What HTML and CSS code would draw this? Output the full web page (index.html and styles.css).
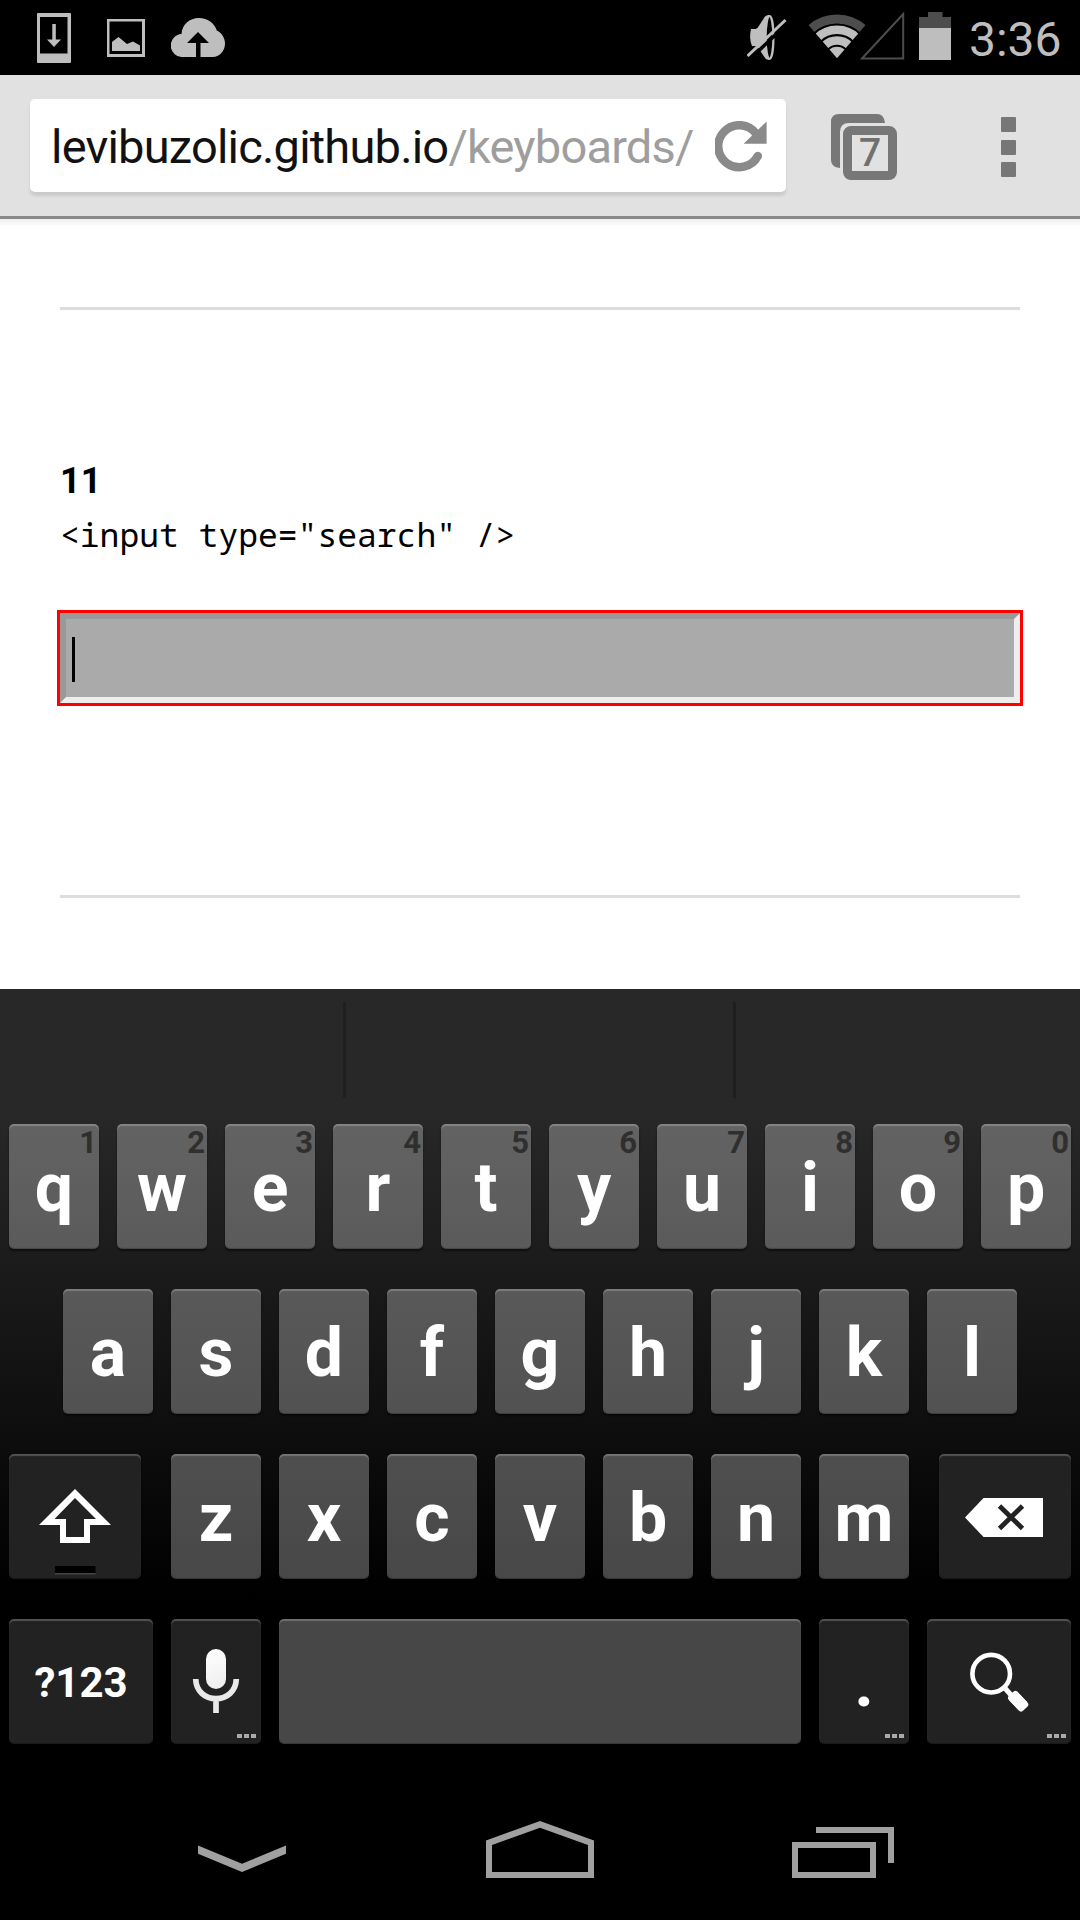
FILE: index.html
```html
<!DOCTYPE html>
<html lang="en">
<head>
<meta charset="utf-8">
<title>Keyboards</title>
<link rel="stylesheet" href="styles.css">
</head>
<body>
<header class="status">
  <div class="notifications">
    <svg width="34" height="50" viewBox="37 13 34 50"><path class="light" fill-rule="evenodd" d="M38 13h32a1 1 0 0 1 1 1v48a1 1 0 0 1-1 1H38a1 1 0 0 1-1-1V14a1 1 0 0 1 1-1zM40 17v36.500h27.500V17z"/><path class="light" d="M52.300 24h3.500v15.500H61L54 47l-7-7.500h5.300z"/></svg>
    <svg width="38" height="38" viewBox="107 19 38 38"><path class="light" fill-rule="evenodd" d="M107 19h38v38h-38zM109.500 21.500v32.500h32.500V21.500z"/><path class="light" d="M112 42l6.500-5 8.500 7 6-2.500 7 4V51h-28z"/></svg>
    <svg width="54" height="39" viewBox="171 19 54 39"><path class="light" d="M183 58a11.500 11.500 0 0 1-1.500-23C182 25.500 189.500 19 199 19c8.500 0 15.500 5 17.800 12.500C222 34 225 39 225 44.500 225 52 219.500 58 212.500 58H200.500V44H209L198 33 187 44h9v14z"/></svg>
  </div>
  <div class="system">
    <svg class="mute" width="40" height="48" viewBox="747 14 40 48"><path class="light" d="M751 29h4.500Q758 28 759.500 25L765 16.500Q767 14.500 769.500 15V60Q766 60 764 56.500L757 46H752q-1.700-4-1.900-8.500 0-5 .9-8.500z"/><ellipse cx="769.500" cy="37.500" rx="3.900" ry="21.300" fill="#000" stroke="#bebebe" stroke-width="2.200"/><path d="M748.500 60.500L788.500 22.500" stroke="#000" stroke-width="3.500"/><path d="M747.500 56L785.500 20" stroke="#bebebe" stroke-width="3"/></svg>
    <svg class="wifi" width="58" height="45" viewBox="807.500 14 58 45"><clipPath id="wedge"><path d="M836.500 58.300L802 18V8h69v10z"/></clipPath><g clip-path="url(#wedge)" fill="none" stroke="#bebebe"><circle cx="836.500" cy="58.300" r="39.300" stroke="#4d4d4d" stroke-width="8.800"/><circle cx="836.500" cy="58.300" r="28.500" stroke-width="8.500"/><circle cx="836.500" cy="58.300" r="17.700" stroke-width="8.500"/><circle cx="836.500" cy="58.300" r="5.800" stroke-width="11.600"/></g></svg>
    <svg class="signal" width="45" height="49" viewBox="860 11 45 49"><path d="M862 58.500L903.200 14v44.500z" fill="none" stroke="#4d4d4d" stroke-width="2"/></svg>
    <svg class="battery" width="32" height="48" viewBox="919 12 32 48"><path fill="#4d4d4d" d="M928 12h14.500v5H951v11h-32V17h9z"/><path class="light" d="M919 28h32v32h-32z"/></svg>
    <span class="clock">3:36</span>
  </div>
</header>
<nav class="toolbar">
  <div class="omnibox">
    <span class="url">levibuzolic.github.io<span class="path">/keyboards/</span></span>
    <svg class="reload" width="52" height="52" viewBox="715 121 52 52"><path d="M757.800 156a21 21 0 1 1-1.500-22" fill="none" stroke="#8a8a8a" stroke-width="8.500" stroke-linecap="round"/><path fill="#8a8a8a" d="M766.600 121.500v22.200h-23z"/></svg>
  </div>
  <div class="tabs">
    <svg width="66" height="66" viewBox="831 114 66 66"><path fill="#777" d="M839 114h38q7 0 8 9H849q-9 0-9 9v36q-9-1-9-8v-38q0-8 8-8z"/><rect x="847.500" y="130.500" width="45" height="45" rx="3.500" fill="none" stroke="#777" stroke-width="9"/><text x="870" y="166" class="tab-count">7</text></svg>
  </div>
  <div class="menu"><i></i><i></i><i></i></div>
</nav>
<main class="page">
  <hr>
  <section class="sample">
    <h2>11</h2>
    <code>&lt;input type="search" /&gt;</code>
    <div class="field"><span class="caret"></span></div>
  </section>
  <hr>
</main>
<section class="keyboard">
  <div class="suggestions"><span></span><span></span><span></span></div>
  <div class="rows">
    <div class="row">
      <div class="key"><small>1</small>q</div><div class="key"><small>2</small>w</div><div class="key"><small>3</small>e</div><div class="key"><small>4</small>r</div><div class="key"><small>5</small>t</div><div class="key"><small>6</small>y</div><div class="key"><small>7</small>u</div><div class="key"><small>8</small>i</div><div class="key"><small>9</small>o</div><div class="key"><small>0</small>p</div>
    </div>
    <div class="row">
      <div class="key">a</div><div class="key">s</div><div class="key">d</div><div class="key">f</div><div class="key">g</div><div class="key">h</div><div class="key">j</div><div class="key">k</div><div class="key">l</div>
    </div>
    <div class="row spread">
      <div class="key dark edge"><svg width="132" height="125" viewBox="9 1454 132 125"><path fill="#fff" fill-rule="evenodd" d="M75 1489l36 36H90v18H60v-18H39zM75 1498l-20.500 21H66v18h18v-18h12z"/><path d="M55 1566h40.500v7H55z"/><path fill="#444" d="M55 1573h40.500v1.500H55z"/></svg></div>
      <div class="row letters"><div class="key">z</div><div class="key">x</div><div class="key">c</div><div class="key">v</div><div class="key">b</div><div class="key">n</div><div class="key">m</div></div>
      <div class="key dark edge"><svg width="132" height="125" viewBox="939 1454 132 125"><path fill="#fff" d="M965 1517.500l18.500-19.500H1043v39H983.500z"/><path d="M999.500 1506l23 22.500m0-22.500l-23 22.500" stroke="#222" stroke-width="4.800"/></svg></div>
    </div>
    <div class="row">
      <div class="key dark wide label">?123</div>
      <div class="key dark"><svg width="90" height="125" viewBox="171 1619 90 125"><defs><linearGradient id="mic" gradientUnits="userSpaceOnUse" x1="206" y1="1649" x2="226" y2="1713"><stop offset="0" stop-color="#fff"/><stop offset="1" stop-color="#e4e4e4"/></linearGradient></defs><rect x="206" y="1649" width="20" height="40" rx="10" fill="url(#mic)"/><path d="M195.700 1679C196 1691 205 1698.700 216 1698.700S236 1691 236.300 1679M216 1699v14" fill="none" stroke="#e9e9e9" stroke-width="5.700"/></svg><b class="more"></b></div>
      <div class="key space"></div>
      <div class="key dark">.<b class="more"></b></div>
      <div class="key dark wide"><svg width="144" height="125" viewBox="927 1619 144 125"><circle cx="991.200" cy="1673.700" r="18.800" fill="none" stroke="#fff" stroke-width="4.600"/><path d="M1003 1686l8 9" stroke="#fff" stroke-width="5"/><path d="M1013.500 1696.500l9.500 9.500" stroke="#fff" stroke-width="11.500" stroke-linejoin="round"/><rect x="-10" y="-6" width="20.500" height="12" rx="3" transform="translate(1018 1701) rotate(47)" fill="#fff"/></svg><b class="more"></b></div>
    </div>
  </div>
</section>
<footer class="navbar">
  <svg width="88" height="27" viewBox="198 1845 88 27"><path d="M198 1845.500l44 18.200 44-18.200v8.200l-44 18.300-44-18.300z"/></svg>
  <svg width="108" height="57" viewBox="486 1821 108 57"><path fill-rule="evenodd" d="M540 1821l54 19.500V1878H486v-37.500zM540 1827.700l-48 17.300v27h96v-27z"/></svg>
  <svg width="102" height="51" viewBox="792 1827 102 51"><path fill-rule="evenodd" d="M792 1842h84v36h-84zM798 1848v24h72v-24zM816 1827h78v36h-6v-30h-72z"/></svg>
</footer>
</body>
</html>
```
FILE: styles.css
```css
* { box-sizing: border-box; }
body {
  margin: 0;
  width: 1080px;
  height: 1920px;
  overflow: hidden;
  display: flex;
  flex-direction: column;
  background: #000;
  font-family: Roboto, sans-serif;
}
svg { display: block; flex: none; }
.light { fill: #bebebe; }

.status {
  height: 75px;
  display: flex;
  justify-content: space-between;
  padding: 0 19px 0 37px;
}
.notifications { display: flex; align-items: center; gap: 36px; }
.notifications svg:last-child { margin-left: -10px; }
.system { display: flex; align-items: flex-start; }
.mute { margin-top: 14px; }
.wifi { margin: 14px 0 0 20.500px; }
.signal { margin: 11px 0 0 -5.500px; }
.battery { margin: 12px 18px 0 14px; }
.clock { width: 92px; font-size: 48px; line-height: 79px; color: #bebebe; white-space: nowrap; }

.toolbar {
  height: 144px;
  display: flex;
  align-items: flex-start;
  padding: 24px 64px 0 30px;
  background: #e1e1e1;
  border-bottom: 3px solid #888a89;
}
.omnibox {
  width: 756px;
  height: 93px;
  display: flex;
  align-items: center;
  justify-content: space-between;
  padding: 0 19px 0 21px;
  background: #fff;
  border-radius: 5px;
  box-shadow: 0 4px 3px #cacaca;
}
.url { font-size: 47px; line-height: 92px; padding-top: 3px; letter-spacing: -.8px; color: #111; white-space: nowrap; }
.path { color: #9e9e9e; }
.reload { margin-top: 3px; }
.tabs { margin: 15px 0 0 45px; }
.tab-count { font: 500 39px Roboto, sans-serif; fill: #707070; text-anchor: middle; }
.menu { margin: 18px 0 0 auto; display: grid; gap: 7.500px; }
.menu i { width: 15px; height: 15px; background: #777; border-radius: 1px; }

.page {
  height: 770px;
  padding: 88px 60px 0;
  background: linear-gradient(#f0f0f0, #fafafa 6px, #fff 6px);
}
hr { height: 3px; margin: 0; border: 0; background: #ddd; }
.sample { height: 585px; padding-top: 150px; }
h2 { margin: 0; font-size: 36px; line-height: 42px; }
code {
  display: block;
  height: 54px;
  margin: 6px 0 51px;
  font: 33px/54px "Droid Sans Mono", "Noto Sans Mono", "DejaVu Sans Mono", monospace;
  white-space: pre;
}
.field {
  height: 90px;
  padding: 18px 6px;
  background: #aaa;
  border: 6px solid;
  border-color: #999 #eee #eee #999;
  outline: 3px solid #f00;
}
.caret { display: block; width: 3px; height: 45px; background: #000; }

.keyboard { height: 781px; }
.suggestions { height: 120px; display: flex; padding: 13px 0 11px; background: #282828; }
.suggestions span { width: 346px; border-right: 3px solid #1f1f1f; }
.suggestions span:nth-child(2) { width: 390px; }
.suggestions span:last-child { border: 0; flex: 1; }
.rows {
  height: 661px;
  display: flex;
  flex-direction: column;
  gap: 40px;
  padding: 15px 9px;
  background: linear-gradient(#282828, #000 490px);
}
.row { display: flex; justify-content: center; gap: 18px; }
.spread { justify-content: space-between; gap: 0; }
.key {
  position: relative;
  width: 90px;
  height: 125px;
  flex: none;
  background: rgba(255, 255, 255, .28);
  border-radius: 5px;
  box-shadow: inset 0 2px 1px rgba(255, 255, 255, .22), inset 0 -1px 1px rgba(0, 0, 0, .25), 0 2px 2px rgba(0, 0, 0, .5);
  color: #fff;
  font-size: 68px;
  font-weight: bold;
  line-height: 128px;
  text-align: center;
}
.key small { position: absolute; top: 0; right: 2px; font-size: 31px; line-height: 38px; color: #2f2f2f; }
.dark { background: #222; }
.edge { width: 132px; }
.wide { width: 144px; }
.space { width: 522px; }
.label { font-size: 42px; }
.more {
  position: absolute;
  right: 5px;
  bottom: 6px;
  width: 19px;
  height: 4px;
  background: repeating-linear-gradient(90deg, #aaa 0 5px, transparent 5px 7px);
}

.navbar { height: 150px; display: flex; align-items: flex-end; padding: 0 186px 42px 198px; justify-content: space-between; }
.navbar svg { fill: #a0a0a0; }
.navbar svg:first-child { margin: 0 1px 6px 0; }
```
